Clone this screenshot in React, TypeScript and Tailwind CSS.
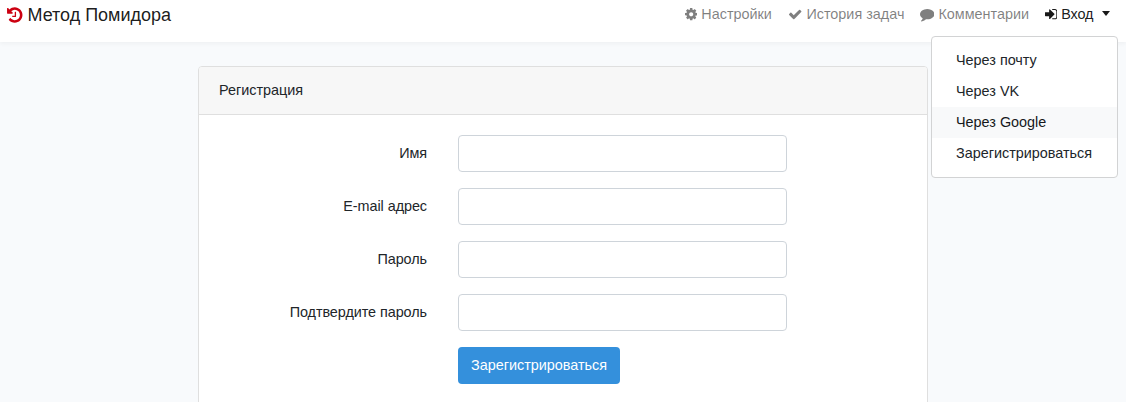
import type { ReactNode } from "react";

const icons = {
  history: {
    box: "128 0 1536 1792",
    d: "M1664 896q0 156-61 298t-164 245-245 164-298 61q-172 0-327-72.5t-264-204.5q-7-10-6.5-22.5t8.5-20.5l137-138q10-9 25-9 16 2 23 12 73 95 179 147t225 52q104 0 198.5-40.5t163.5-109.5 109.5-163.5 40.5-198.5-40.5-198.5-109.5-163.5-163.5-109.5-198.5-40.5q-98 0-188 35.5t-160 101.5l137 138q31 30 14 69-17 40-59 40h-448q-26 0-45-19t-19-45v-448q0-42 40-59 39-17 69 14l130 129q107-101 244.5-156.5t284.5-55.5q156 0 298 61t245 164 164 245 61 298zm-640-288v448q0 14-9 23t-23 9h-320q-14 0-23-9t-9-23v-64q0-14 9-23t23-9h224v-352q0-14 9-23t23-9h64q14 0 23 9t9 23z",
  },
  cog: {
    box: "128 0 1536 1792",
    d: "M1152 896q0-106-75-181t-181-75-181 75-75 181 75 181 181 75 181-75 75-181zm512-109v222q0 12-8 23t-20 13l-185 28q-19 54-39 91 35 50 107 138 10 12 10 25t-9 23q-27 37-99 108t-94 71q-12 0-26-9l-138-108q-44 23-91 38-16 136-29 186-7 28-36 28h-222q-14 0-24.5-8.5t-11.5-21.5l-28-184q-49-16-90-37l-141 107q-10 9-25 9-14 0-25-11-126-114-165-168-7-10-7-23 0-12 8-23 15-21 51-66.5t54-70.5q-27-50-41-99l-183-27q-13-2-21-12.5t-8-23.5v-222q0-12 8-23t19-13l186-28q14-46 39-92-40-57-107-138-10-12-10-24 0-10 9-23 26-36 98.5-107.5t94.5-71.5q13 0 26 10l138 107q44-23 91-38 16-136 29-186 7-28 36-28h222q14 0 24.5 8.5t11.5 21.5l28 184q49 16 90 37l142-107q9-9 24-9 13 0 25 10 129 119 165 170 7 8 7 22 0 12-8 23-15 21-51 66.5t-54 70.5q26 50 41 98l183 28q13 2 21 12.5t8 23.5z",
  },
  check: {
    box: "0 0 1792 1792",
    d: "M1671 566q0 40-28 68l-724 724-136 136q-28 28-68 28t-68-28l-136-136-362-362q-28-28-28-68t28-68l136-136q28-28 68-28t68 28l294 295 656-657q28-28 68-28t68 28l136 136q28 28 28 68z",
  },
  comment: {
    box: "0 0 1792 1792",
    d: "M1792 896q0 174-120 321.5t-326 233-450 85.5q-70 0-145-8-198 175-460 242-49 14-114 22-17 2-30.5-9t-17.5-29v-1q-3-4-.5-12t2-10 4.5-9.5l6-9 7-8.5 8-9q7-8 31-34.5t34.5-38 31-39.5 32.5-51 27-59 26-76q-157-89-247.5-220t-90.5-281q0-130 71-248.5t191-204.5 286-136.5 348-50.5q244 0 450 85.5t326 233 120 321.5z",
  },
  signIn: {
    box: "128 0 1536 1792",
    d: "M1312 896q0 26-19 45l-544 544q-19 19-45 19t-45-19-19-45v-288h-448q-26 0-45-19t-19-45v-384q0-26 19-45t45-19h448v-288q0-26 19-45t45-19 45 19l544 544q19 19 19 45zm352-352v704q0 119-84.5 203.5t-203.5 84.5h-320q-13 0-22.5-9.5t-9.5-22.5q0-4-1-20t-.5-26.5 3-23.5 10-19.5 20.5-6.5h320q66 0 113-47t47-113v-704q0-66-47-113t-113-47h-312l-11.5-1-11.5-3-8-5.5-7-9-2-13.5q0-4-1-20t-.5-26.5 3-23.5 10-19.5 20.5-6.5h320q119 0 203.5 84.5t84.5 203.5z",
  },
};

function Icon({ name, className }: { name: keyof typeof icons; className: string }) {
  return (
    <svg viewBox={icons[name].box} className={`shrink-0 fill-current ${className}`} aria-hidden="true">
      <path d={icons[name].d} />
    </svg>
  );
}

function NavLink({ className, children }: { className: string; children: ReactNode }) {
  return (
    <a href="#" className={`flex items-center whitespace-nowrap ${className}`}>
      {children}
    </a>
  );
}

function Field({ label, type }: { label: string; type: string }) {
  return (
    <label className="mb-4 flex h-[37px] items-center">
      <span className="mr-[31px] w-[228px] text-right tracking-[-0.06px] whitespace-nowrap">{label}</span>
      <input type={type} className="h-[37px] w-[329px] rounded border border-[#ced4da] bg-white px-3 outline-none" />
    </label>
  );
}

export default function App() {
  return (
    <div className="h-[402px] overflow-hidden bg-[#f8fafc] font-['Liberation_Sans',sans-serif] text-[14.4px] leading-[23px] text-[#212529]">
      <nav className="relative flex h-[42px] items-start justify-between bg-white pl-[7px] shadow-[0_2px_4px_rgba(0,0,0,0.04)]">
        <a href="#" className="flex h-[30px] items-center text-[18px] whitespace-nowrap text-black/90">
          <Icon name="history" className="mr-[5px] h-[18px] w-[15.5px] text-[#cc0011]" />
          <span className="tracking-[-0.02px]">Метод Помидора</span>
        </a>
        <div className="flex h-[29px] items-center pr-4 text-black/50">
          <NavLink className="w-[104px]">
            <Icon name="cog" className="mr-1 h-[14.4px] w-[12.35px]" />
            <span>Настройки</span>
          </NavLink>
          <NavLink className="w-[131px]">
            <Icon name="check" className="mr-1 -ml-px h-[14.4px] w-[14.4px]" />
            <span>История задач</span>
          </NavLink>
          <NavLink className="w-[125px]">
            <Icon name="comment" className="mr-1 h-[14.4px] w-[14.4px]" />
            <span>Комментарии</span>
          </NavLink>
          <NavLink className="w-[65px] text-black/90">
            <Icon name="signIn" className="mr-1 h-[14.4px] w-[12.35px]" />
            <span className="tracking-[-0.2px]">Вход</span>
            <span className="mt-[-3px] ml-auto border-x-[4.5px] border-t-[5px] border-x-transparent border-t-current" />
          </NavLink>
        </div>
        <div className="absolute top-[36px] right-[8px] z-10 flex h-[142px] w-[187px] flex-col rounded border border-[#d2d3d4] bg-white py-2 whitespace-nowrap">
          <a href="#" className="h-[31px] px-6 leading-[31px]">Через почту</a>
          <a href="#" className="h-[31px] px-6 leading-[31px]">Через VK</a>
          <a href="#" className="h-[31px] bg-[#f8f9fa] px-6 leading-[31px] text-[#16181b]">Через Google</a>
          <a href="#" className="h-[31px] px-6 leading-[31px]">Зарегистрироваться</a>
        </div>
      </nav>
      <main className="pt-6 pl-[198px]">
        <section className="h-[400px] w-[730px] rounded border border-[#dfdfdf] bg-white">
          <h1 className="h-[48px] rounded-t-[3px] border-b border-[#dfdfdf] bg-[#f7f7f7] pl-5 leading-[47px]">Регистрация</h1>
          <form className="pt-5">
            <Field label="Имя" type="text" />
            <Field label="E-mail адрес" type="email" />
            <Field label="Пароль" type="password" />
            <Field label="Подтвердите пароль" type="password" />
            <button type="button" className="ml-[259px] h-[37px] w-[162px] rounded bg-[#3490dc] whitespace-nowrap text-white">
              Зарегистрироваться
            </button>
          </form>
        </section>
      </main>
    </div>
  );
}
